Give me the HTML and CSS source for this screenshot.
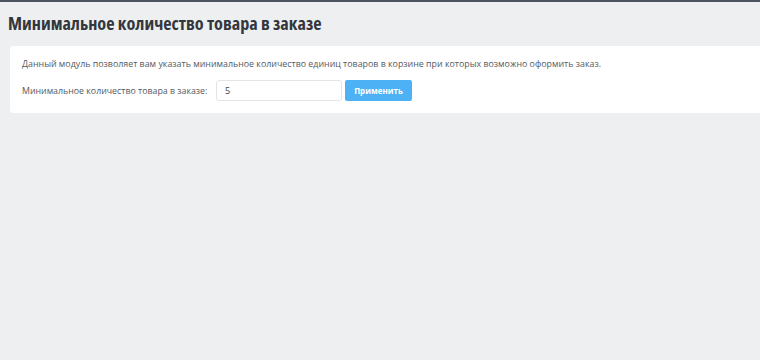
FILE: index.html
```html
<!DOCTYPE html>
<html lang="ru">
<head>
<meta charset="utf-8">
<title>Минимальное количество товара в заказе</title>
<link rel="stylesheet" href="styles.css">
</head>
<body>
<div class="topbar"></div>
<main class="page">
  <h1 class="title">Минимальное количество товара в заказе</h1>
  <section class="card">
    <p class="desc">Данный модуль позволяет вам указать минимальное количество единиц товаров в корзине при которых возможно оформить заказ.</p>
    <form class="row">
      <label class="label" for="qty">Минимальное количество товара в заказе:</label>
      <input class="input" id="qty" type="text" value="5">
      <button class="btn" type="button">Применить</button>
    </form>
  </section>
</main>
</body>
</html>
```
FILE: styles.css
```css
html, body {
  margin: 0;
  padding: 0;
  background: #eeeff1;
  height: 100%;
}
body {
  font-family: "Open Sans", "Liberation Sans", sans-serif;
  color: #4a4f57;
}
.topbar {
  height: 2px;
  background: #4b5361;
}
.page {
  padding: 9px 0 0 10px;
}
.title {
  margin: 0 0 0 -2px;
  font-family: "Open Sans", sans-serif;
  font-stretch: 75%;
  font-weight: 700;
  font-size: 18.2px;
  line-height: 24px;
  color: #33373d;
  height: 35px;
}
.card {
  background: #fff;
  border-radius: 3px 0 0 3px;
  padding: 12px;
  height: 43px;
}
.desc {
  margin: 0;
  font-size: 8.85px;
  line-height: 13px;
  color: #555a61;
}
.row {
  margin-top: 9px;
  display: flex;
  align-items: center;
}
.label {
  font-size: 8.8px;
  color: #555a61;
  width: 194px;
}
.input {
  box-sizing: border-box;
  width: 126px;
  height: 21px;
  border: 1px solid #e2e4e7;
  border-radius: 3px;
  padding: 0 8px;
  font-family: "Open Sans", sans-serif;
  font-size: 9px;
  color: #444;
  background: #fff;
}
.btn {
  box-sizing: border-box;
  margin-left: 3px;
  height: 21px;
  width: 67px;
  border: 0;
  border-radius: 2px;
  background: #4cb1f5;
  color: #fff;
  font-family: "Open Sans", sans-serif;
  font-weight: 700;
  font-size: 8px;
  padding: 0;
}
```
